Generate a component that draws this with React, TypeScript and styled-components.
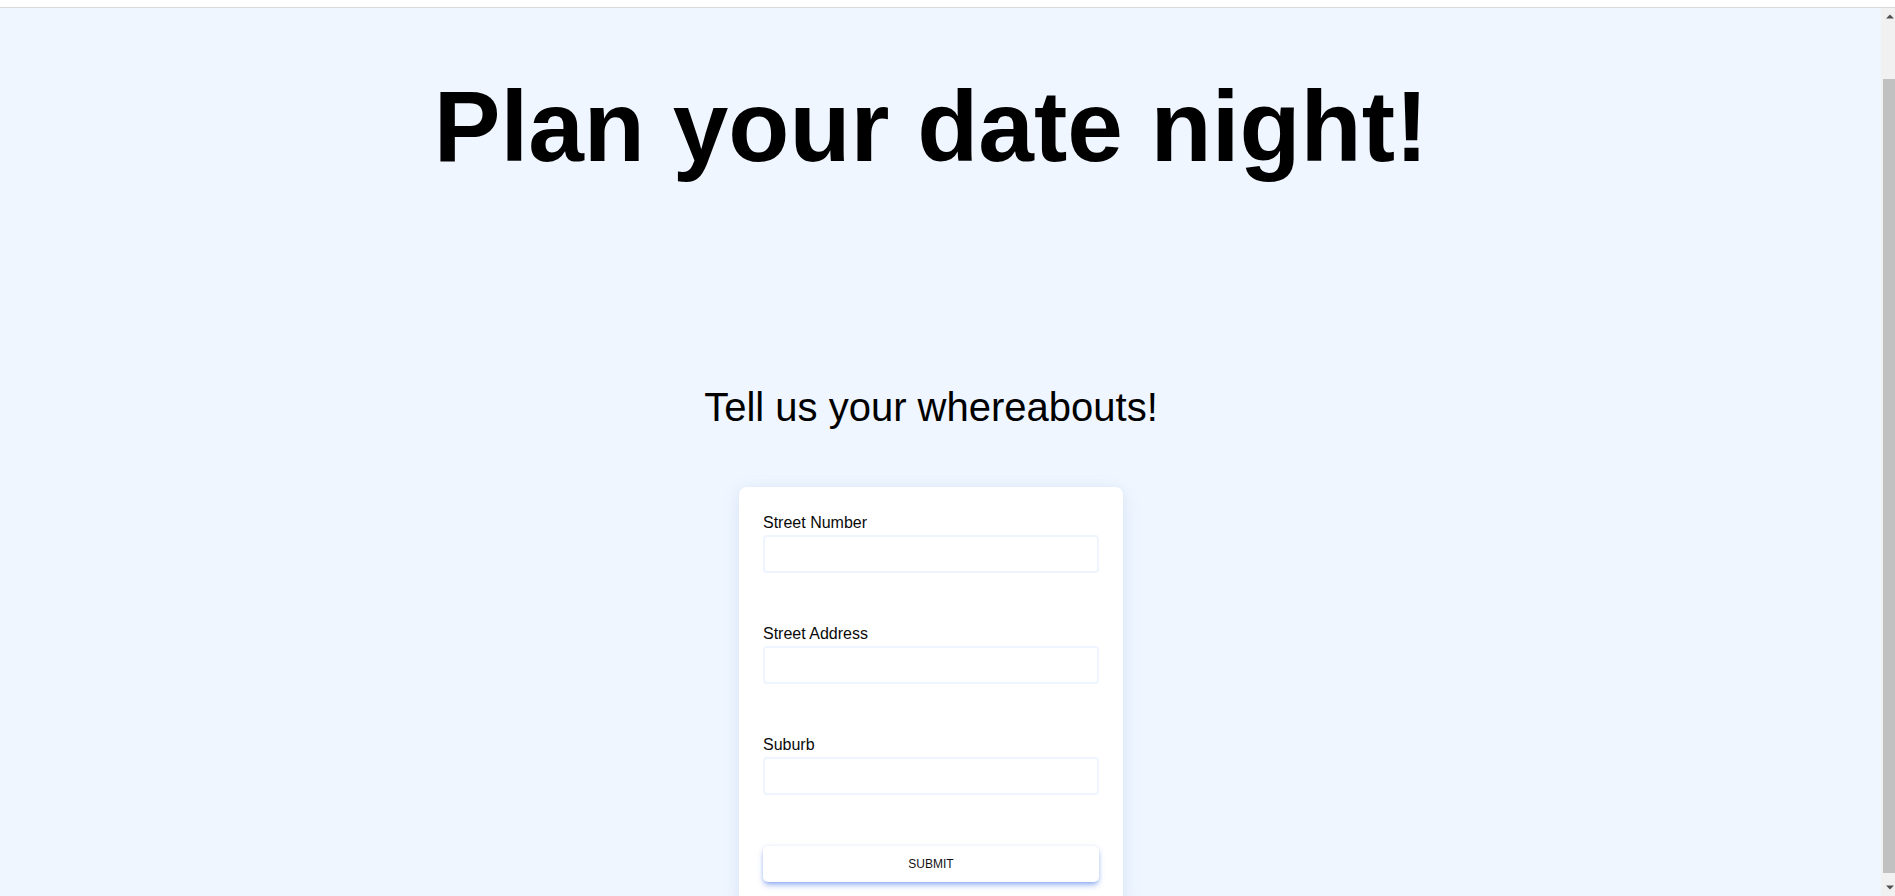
import React from "react";
import styled, { createGlobalStyle } from "styled-components";

const GlobalStyle = createGlobalStyle`
  html, body {
    margin: 0;
    padding: 0;
    height: 100%;
    overflow: hidden;
    background: #ffffff;
    font-family: "Liberation Sans", Arial, sans-serif;
  }
  #root { height: 100%; }
  * { box-sizing: border-box; }
`;

const Page = styled.div`
  display: flex;
  flex-direction: column;
  height: 100vh;
`;

const TopStrip = styled.div`
  flex: 0 0 8px;
  background: #ffffff;
  border-bottom: 1px solid #d9dadc;
`;

const Viewport = styled.div`
  flex: 1;
  display: flex;
  min-height: 0;
`;

const Main = styled.main`
  flex: 1;
  min-width: 0;
  overflow: hidden;
  background: #eff6ff;
  display: flex;
  flex-direction: column;
  align-items: center;
  padding: 61px 19px 0 0;
`;

const Title = styled.h1`
  margin: 0;
  font-family: "Liberation Sans", Arial, sans-serif;
  font-weight: 700;
  font-size: 100px;
  line-height: 115px;
  color: #000000;
  text-align: center;
  white-space: nowrap;
`;

const Subtitle = styled.h2`
  margin: 200px 0 0;
  font-family: "Liberation Sans", Arial, sans-serif;
  font-weight: 400;
  font-size: 40px;
  line-height: 46px;
  color: #000000;
  text-align: center;
  white-space: nowrap;
`;

const Card = styled.form`
  margin-top: 57px;
  width: 384px;
  flex-shrink: 0;
  background: #ffffff;
  border-radius: 8px;
  padding: 24px;
  box-shadow: 0 6px 20px rgba(120, 150, 200, 0.14), 0 0 8px rgba(150, 180, 220, 0.1);
  display: flex;
  flex-direction: column;
`;

const Field = styled.div`
  display: flex;
  flex-direction: column;
  margin-bottom: 49px;
`;

const Label = styled.label`
  font-family: "Liberation Sans", Arial, sans-serif;
  font-size: 16px;
  line-height: 24px;
  color: #0a0a0a;
`;

const Input = styled.input`
  height: 38px;
  width: 100%;
  border: 2px solid #eef5ff;
  border-radius: 4px;
  background: #ffffff;
  outline: none;
  font-family: "Liberation Sans", Arial, sans-serif;
  font-size: 16px;
  padding: 0 8px;
`;

const SubmitButton = styled.button`
  margin-top: 2px;
  height: 36px;
  width: 100%;
  border: none;
  border-radius: 5px;
  background: #ffffff;
  font-family: "Liberation Sans", Arial, sans-serif;
  font-size: 12px;
  letter-spacing: 0;
  text-transform: uppercase;
  color: #111111;
  box-shadow: 0 4px 6px -1px rgba(59, 110, 230, 0.45), 0 2px 4px -2px rgba(59, 110, 230, 0.4),
    0 -1px 4px rgba(150, 170, 210, 0.12);
  cursor: pointer;
`;

const ScrollBar = styled.div`
  flex: 0 0 14px;
  background: #f1f1f1;
  display: flex;
  flex-direction: column;
`;

const ArrowButton = styled.div`
  flex: 0 0 17px;
  display: flex;
  align-items: center;
  padding-left: 5px;
`;

const Track = styled.div`
  flex: 1;
  display: flex;
  flex-direction: column;
`;

const Thumb = styled.div`
  margin: 54px 0 0 2px;
  height: 794px;
  background: #c1c1c1;
`;

const Arrow = ({ dir }: { dir: "up" | "down" }) => (
  <svg width="8" height="5" viewBox="0 0 8 5">
    {dir === "up" ? (
      <polygon points="0,4.5 4,0.5 8,4.5" fill="#505050" />
    ) : (
      <polygon points="0,0.5 4,4.5 8,0.5" fill="#505050" />
    )}
  </svg>
);

const fields = ["Street Number", "Street Address", "Suburb"];

export default function App() {
  return (
    <>
      <GlobalStyle />
      <Page>
        <TopStrip />
        <Viewport>
          <Main>
            <Title>Plan your date night!</Title>
            <Subtitle>Tell us your whereabouts!</Subtitle>
            <Card onSubmit={(e) => e.preventDefault()}>
              {fields.map((f) => (
                <Field key={f}>
                  <Label htmlFor={f}>{f}</Label>
                  <Input id={f} type="text" />
                </Field>
              ))}
              <SubmitButton type="submit">Submit</SubmitButton>
            </Card>
          </Main>
          <ScrollBar>
            <ArrowButton>
              <Arrow dir="up" />
            </ArrowButton>
            <Track>
              <Thumb />
            </Track>
            <ArrowButton>
              <Arrow dir="down" />
            </ArrowButton>
          </ScrollBar>
        </Viewport>
      </Page>
    </>
  );
}
